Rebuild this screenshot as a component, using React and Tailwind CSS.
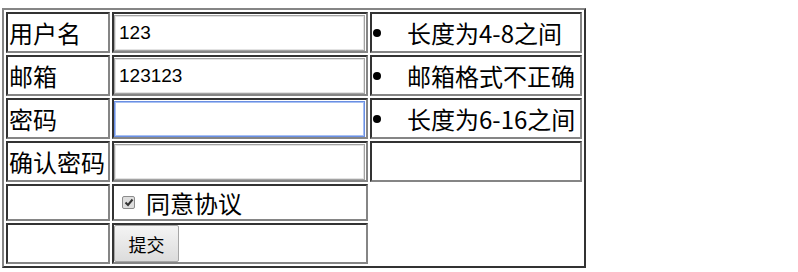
import React from "react";

const cjk = { fontFamily: '"Noto Sans CJK SC", "Noto Sans", sans-serif' };

function Cell({ children, className = "" }) {
  return (
    <div
      className={
        "border-2 border-t-[#333333] border-l-[#333333] border-b-[#858585] border-r-[#858585] bg-white flex items-center overflow-hidden " +
        className
      }
    >
      {children}
    </div>
  );
}

function Label({ text }) {
  return (
    <Cell className="pl-[1px]">
      <span className="text-[24px] leading-none text-black whitespace-nowrap" style={cjk}>
        {text}
      </span>
    </Cell>
  );
}

function Input({ value, focused }) {
  return (
    <Cell className="pl-0">
      <input
        readOnly
        value={value}
        className={
          "w-[251px] h-[36px] bg-white pl-[4px] text-[19px] text-black outline-none border " +
          (focused
            ? "border-[#6a8fe3] shadow-[inset_0_0_0_1px_#a8c0f2]"
            : "border-[#a3a3a3] shadow-[inset_0_0_0_1px_#e2e2e2]")
        }
        style={{ fontFamily: '"Liberation Sans", Arial, sans-serif' }}
      />
    </Cell>
  );
}

function Hint({ text }) {
  return (
    <Cell className="pl-[1px]">
      <span className="w-[8px] h-[8px] rounded-full bg-black shrink-0" />
      <span className="ml-[26px] text-[24px] leading-none text-black whitespace-nowrap" style={cjk}>
        {text}
      </span>
    </Cell>
  );
}

export default function App() {
  return (
    <div className="w-[798px] h-[272px] bg-white pt-[8px] pl-[2px]">
      <div className="w-[584px] border-2 border-t-[#858585] border-l-[#858585] border-b-[#333333] border-r-[#333333] p-[2px] grid grid-cols-[104px_256px_212px] grid-rows-[41px_41px_41px_41px_37px_41px] gap-[2px] bg-white">
        <Label text="用户名" />
        <Input value="123" />
        <Hint text="长度为4-8之间" />

        <Label text="邮箱" />
        <Input value="123123" />
        <Hint text="邮箱格式不正确" />

        <Label text="密码" />
        <Input value="" focused />
        <Hint text="长度为6-16之间" />

        <Label text="确认密码" />
        <Input value="" />
        <Cell />

        <Cell />
        <Cell className="pl-[8px]">
          <span className="w-[13px] h-[13px] border border-[#8c8c8c] bg-[#dedede] rounded-[2px] flex items-center justify-center shrink-0">
            <svg width="10" height="9" viewBox="0 0 10 9">
              <path d="M1.5 4.5 L4 7 L8.5 1.5" fill="none" stroke="#333" strokeWidth="2" />
            </svg>
          </span>
          <span className="ml-[11px] text-[24px] leading-none text-black whitespace-nowrap" style={cjk}>
            同意协议
          </span>
        </Cell>
        <div />

        <Cell />
        <Cell className="pl-0">
          <button
            className="w-[65px] h-[37px] border border-[#a6a6a6] rounded-[2px] bg-gradient-to-b from-[#f4f4f4] to-[#dcdcdc] text-[18px] text-black leading-none"
            style={cjk}
          >
            提交
          </button>
        </Cell>
        <div />
      </div>
    </div>
  );
}
